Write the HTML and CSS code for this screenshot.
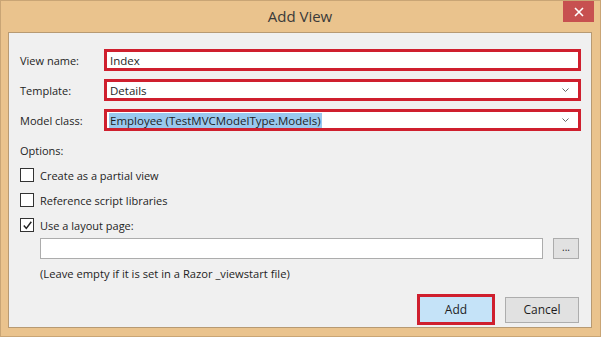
FILE: index.html
```html
<!DOCTYPE html>
<html>
<head>
<meta charset="utf-8">
<link rel="stylesheet" href="styles.css">
</head>
<body>
<div class="window">
  <div class="titlebar">
    <span class="title">Add View</span>
    <div class="close"><svg width="10" height="10" viewBox="0 0 10 10"><path d="M1 1L9 9M9 1L1 9" stroke="#fff" stroke-width="1.6"/></svg></div>
  </div>
  <div class="content">
    <div class="form">
      <label class="lbl">View name:</label>
      <div class="field hl"><span>Index</span></div>
      <label class="lbl">Template:</label>
      <div class="field hl combo"><span>Details</span><svg class="chev" width="7" height="4" viewBox="0 0 7 4"><path d="M0.5 0.5L3.5 3.5L6.5 0.5" fill="none" stroke="#666" stroke-width="1"/></svg></div>
      <label class="lbl">Model class:</label>
      <div class="field hl combo"><span class="sel">Employee (TestMVCModelType.Models)</span><svg class="chev" width="7" height="4" viewBox="0 0 7 4"><path d="M0.5 0.5L3.5 3.5L6.5 0.5" fill="none" stroke="#666" stroke-width="1"/></svg></div>
    </div>
    <div class="options">Options:</div>
    <div class="checks">
      <div class="check"><span class="box"></span><span>Create as a partial view</span></div>
      <div class="check"><span class="box"></span><span>Reference script libraries</span></div>
      <div class="check"><span class="box"><svg width="11" height="11" viewBox="0 0 11 11"><path d="M1.8 5.6L4.3 8.4L9.3 1.8" fill="none" stroke="#222" stroke-width="1.5"/></svg></span><span>Use a layout page:</span></div>
    </div>
    <div class="layout">
      <div class="path"></div>
      <div class="browse">...</div>
    </div>
    <div class="hint">(Leave empty if it is set in a Razor _viewstart file)</div>
    <div class="buttons">
      <div class="btn add">Add</div>
      <div class="btn cancel">Cancel</div>
    </div>
  </div>
</div>
</body>
</html>
```
FILE: styles.css
```css
html, body {
  margin: 0;
  padding: 0;
  background: #e9c18c;
}
body {
  font-family: "Open Sans", "Noto Sans", sans-serif;
  font-size: 11px;
  color: #1e1e1e;
}
.window {
  width: 601px;
  height: 337px;
  box-sizing: border-box;
  border: 1px solid #c9a575;
  background: #eac38d;
  display: flex;
  flex-direction: column;
  padding: 0 8px 8px 7px;
}
.titlebar {
  height: 31px;
  display: flex;
  justify-content: center;
  align-items: center;
  position: relative;
}
.title {
  font-size: 15px;
  color: #3a3a3a;
  margin-top: -1px;
}
.close {
  position: absolute;
  right: -2px;
  top: 0;
  width: 31px;
  height: 21px;
  background: #c75050;
  display: flex;
  align-items: center;
  justify-content: center;
}
.content {
  flex: 1;
  background: #f0f0f0;
  border: 1px solid #b79a73;
  padding: 16px 10px 0 11px;
  display: flex;
  flex-direction: column;
}
.form {
  display: grid;
  grid-template-columns: 84px 1fr;
  row-gap: 8px;
  align-items: center;
}
.lbl {
  color: #1e1e1e;
}
.field {
  height: 16px;
  border: 3px solid #cf1f2e;
  background: #fff;
  display: flex;
  align-items: center;
  padding: 0 9px 0 3px;
  justify-content: space-between;
  font-size: 11.5px;
}
.sel {
  background: #99c9ef;
  padding: 0 1px;
  margin-left: -1px;
}
.options {
  margin-top: 12px;
}
.checks {
  display: flex;
  flex-direction: column;
  gap: 11px;
  margin-top: 10px;
}
.check {
  display: flex;
  align-items: center;
  gap: 6px;
  height: 14px;
}
.box {
  width: 12px;
  height: 12px;
  border: 1px solid #333;
  background: #fff;
  display: flex;
  align-items: center;
  justify-content: center;
}
.layout {
  display: flex;
  align-items: center;
  margin-top: 6px;
  padding-left: 20px;
  padding-right: 2px;
  gap: 10px;
}
.path {
  flex: 1;
  height: 19px;
  border: 1px solid #acacac;
  background: #fff;
}
.browse {
  width: 24px;
  border: 1px solid #acacac;
  background: #e1e1e1;
  display: flex;
  align-items: center;
  justify-content: center;
  font-size: 10px;
  line-height: 10px;
  padding-bottom: 3px;
  height: 16px;
}
.hint {
  padding-left: 20px;
  margin-top: 7px;
  font-size: 11.2px;
}
.buttons {
  display: flex;
  justify-content: flex-end;
  align-items: center;
  gap: 10px;
  margin-top: 13px;
  padding-right: 2px;
}
.btn {
  display: flex;
  align-items: center;
  justify-content: center;
  font-size: 12px;
}
.add {
  width: 72px;
  height: 25px;
  border: 3px solid #cf1f2e;
  background: #c5e3f8;
}
.cancel {
  width: 72px;
  height: 24px;
  border: 1px solid #adadad;
  background: #e1e1e1;
}
```
